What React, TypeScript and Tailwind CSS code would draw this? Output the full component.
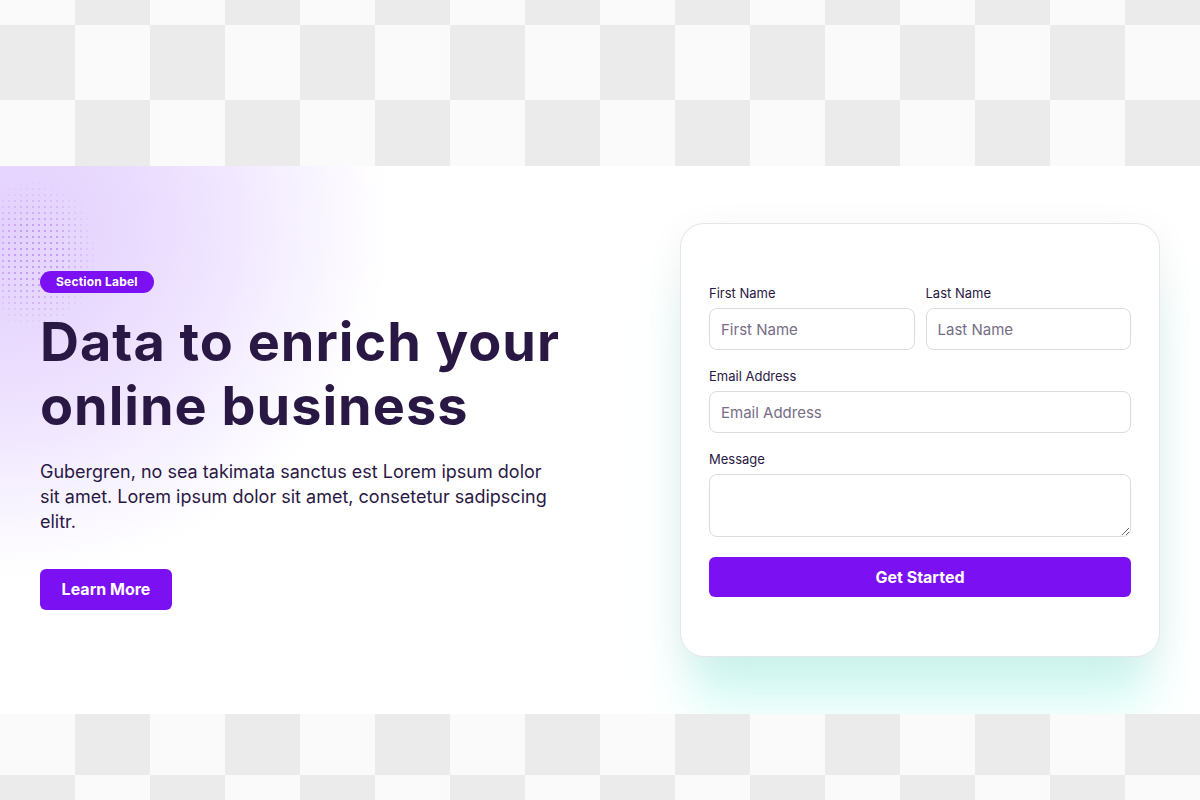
import React from 'react';

const Field: React.FC<{ label: string; placeholder?: string; area?: boolean }> = ({ label, placeholder, area }) => (
  <label className="flex flex-col gap-[7px]">
    <span className="text-[13px] leading-4 text-[#2a1844]">{label}</span>
    {area ? (
      <textarea className="h-[63px] w-full rounded-lg border border-[#dcdbe0] bg-white px-3 py-2 text-[15px] outline-none" />
    ) : (
      <input
        placeholder={placeholder}
        className="h-[42px] w-full rounded-lg border border-[#dcdbe0] bg-white px-[11px] text-[15px] text-[#2a1844] outline-none placeholder:text-[#766d86]"
      />
    )}
  </label>
);

export default function App() {
  return (
    <div
      className="min-h-[800px] w-full bg-[conic-gradient(#ebebeb_90deg,#fafafa_90deg_180deg,#ebebeb_180deg_270deg,#fafafa_270deg)] bg-[length:150px_150px] bg-[position:0_-50px] pt-[166px] font-['Inter',sans-serif]"
    >
      <section className="relative flex h-[548px] items-center justify-between overflow-hidden bg-white px-10">
        {/* purple glow, top-left */}
        <div className="absolute inset-0 bg-[radial-gradient(ellipse_300px_270px_at_0_60px,#e4d1fe_0%,#e8d9fe_40%,#f0e6ff_75%,#f7f2ff_100%,#ffffff_130%)]" />
        <div className="absolute left-[-30px] top-[14px] h-[150px] w-[130px] bg-[radial-gradient(circle,#c09cf4_0.7px,transparent_1px)] bg-[length:6px_6px] [mask-image:radial-gradient(ellipse_at_center,black_25%,transparent_70%)]" />

        <div className="relative flex w-[530px] flex-col items-start">
          <span className="rounded-full bg-[#7b10f3] px-4 text-[12px] leading-[22px] font-bold tracking-[0.2px] text-white">
            Section Label
          </span>
          <h1 className="mt-[17px] text-[54px] leading-[64px] font-bold tracking-[1px] whitespace-nowrap text-[#2a1844]">
            Data to enrich your
            <br />
            online business
          </h1>
          <p className="mt-[21px] w-[515px] text-[18px] leading-[25px] text-[#2a1844]">
            Gubergren, no sea takimata sanctus est Lorem ipsum dolor sit amet. Lorem ipsum dolor sit amet, consetetur
            sadipscing elitr.
          </p>
          <button className="mt-[35px] h-[41px] w-[132px] rounded-md bg-[#7b10f3] text-[16px] font-bold text-white">
            Learn More
          </button>
        </div>

        <div className="relative w-[480px] rounded-3xl border border-[#e6e6ea] bg-white px-[28px] pt-[61px] pb-[59px] shadow-[0_10px_40px_rgba(0,0,0,0.06),0_60px_50px_-10px_rgba(150,245,230,0.4)]">
          <form className="flex flex-col gap-[18px]">
            <div className="grid grid-cols-2 gap-[11px]">
              <Field label="First Name" placeholder="First Name" />
              <Field label="Last Name" placeholder="Last Name" />
            </div>
            <Field label="Email Address" placeholder="Email Address" />
            <Field label="Message" area />
            <button type="button" className="mt-[2px] h-10 w-full rounded-md bg-[#7b10f3] text-[16px] font-bold text-white">
              Get Started
            </button>
          </form>
        </div>
      </section>
    </div>
  );
}
